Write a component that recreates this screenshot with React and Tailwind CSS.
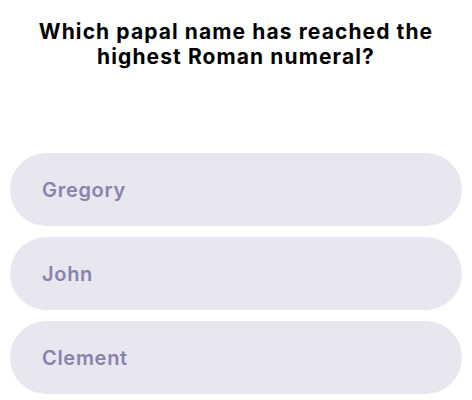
export default function App() {
  const options = ["Gregory", "John", "Clement"];

  return (
    <div className="w-[472px] h-[400px] bg-white font-['Inter','Noto_Sans',sans-serif]">
      {/* Question */}
      <h1 className="pt-[19px] px-2 text-center text-[21px] leading-[25px] font-bold tracking-[1.1px] text-black">
        Which papal name has reached the
        <br />
        highest Roman numeral?
      </h1>

      {/* Answers */}
      <div className="mt-[84px] px-[10px] flex flex-col gap-[11px]">
        {options.map((option) => (
          <button
            key={option}
            className="h-[73px] w-full rounded-full bg-[#e8e6ee] pl-[32px] flex items-center text-left text-[20px] font-semibold tracking-[0.7px] text-[#8882ad]"
          >
            {option}
          </button>
        ))}
      </div>
    </div>
  );
}
